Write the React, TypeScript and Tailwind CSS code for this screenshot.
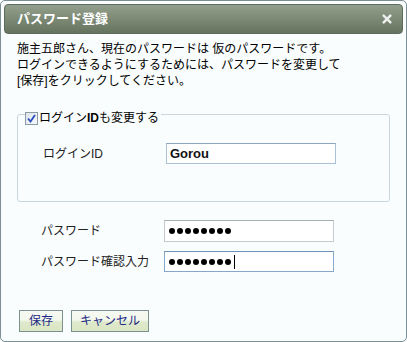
import React from "react";

const FONT = { fontFamily: '"Liberation Sans", "Noto Sans CJK JP", sans-serif' };

function Dots({ caret }: { caret?: boolean }) {
  return (
    <div className="flex items-center gap-[2px]">
      {Array.from({ length: 8 }).map((_, i) => (
        <span key={i} className="block w-[6px] h-[6px] rounded-full bg-black" />
      ))}
      {caret && <span className="block w-[1px] h-[14px] bg-black ml-[1px]" />}
    </div>
  );
}

export default function App() {
  return (
    <div
      className="w-[407px] h-[342px] border border-[#7b8f95] rounded-[5px] bg-[#fafdfd] p-[3px] flex flex-col text-black"
      style={FONT}
    >
      <div className="h-[30px] rounded-[4px] border border-[#5d6c5c] bg-gradient-to-b from-[#929f8c] to-[#65745f] flex items-center justify-between pl-[12px] pr-[10px]">
        <span className="text-white font-bold text-[13px] leading-[16px]">パスワード登録</span>
        <svg width="10" height="10" viewBox="0 0 10 10">
          <path d="M1.8 1.8 L8.2 8.2 M8.2 1.8 L1.8 8.2" stroke="#eef0ee" strokeWidth="2.4" strokeLinecap="square" />
        </svg>
      </div>

      <div className="px-[13px] flex flex-col">
        <p className="mt-[7px] text-[12px] leading-[16px]">
          施主五郎さん、現在のパスワードは 仮のパスワードです。
          <br />
          ログインできるようにするためには、パスワードを変更して
          <br />
          [保存]をクリックしてください。
        </p>

        <fieldset className="mt-[13px] border border-[#c9d6de] rounded-[3px] p-0 m-0">
          <legend className="ml-[7px] pr-[2px] h-[24px] pt-[8px] flex items-center p-0">
            <span className="flex items-center">
              <span className="w-[13px] h-[13px] border border-[#8b9ba3] bg-gradient-to-br from-[#dfe4ea] to-[#f7f9fb] flex items-center justify-center mr-[1px]">
                <svg width="9" height="9" viewBox="0 0 9 9">
                  <path d="M1 4.5 L3.5 7.5 L8 1" stroke="#2a4ec0" strokeWidth="1.8" fill="none" />
                </svg>
              </span>
              <span className="text-[12px] leading-[16px]">
                ログイン<b>ID</b>も変更する
              </span>
            </span>
          </legend>
          <div className="flex items-center pl-[25px] mt-[17px] mb-[37px]">
            <span className="w-[123px] text-[12px] leading-[16px] text-[#222]">ログインID</span>
            <div className="w-[170px] h-[21px] border border-[#a9c2d8] border-t-[#8ea6bd] bg-white flex items-center pl-[3px]">
              <span className="text-[13px] font-bold leading-[16px] text-[#111]">Gorou</span>
            </div>
          </div>
        </fieldset>

        <div className="flex flex-col pl-[24px] mt-[18px]">
          <div className="flex items-center">
            <span className="w-[123px] text-[12px] leading-[16px] text-[#222]">パスワード</span>
            <div className="w-[170px] h-[22px] border border-[#c4cacd] border-t-[#a9b0b4] bg-white flex items-center pl-[4px]">
              <Dots />
            </div>
          </div>
          <div className="flex items-center mt-[9px]">
            <span className="w-[123px] text-[12px] leading-[16px] text-[#222]">パスワード確認入力</span>
            <div className="w-[170px] h-[21px] border border-[#86a9cb] border-t-[#6f93b8] bg-white flex items-center pl-[4px]">
              <Dots caret />
            </div>
          </div>
        </div>

        <div className="flex items-center gap-[8px] ml-[2px] mt-[38px]">
          <button className="w-[44px] h-[22px] border border-[#7b9191] bg-[linear-gradient(to_bottom,#f6f9f0_0%,#f3f7ec_45%,#dfe9cb_55%,#dbe6c4_100%)] text-[12px] leading-[16px] text-[#1c2a86] flex items-center justify-center">
            保存
          </button>
          <button className="w-[78px] h-[22px] border border-[#7b9191] bg-[linear-gradient(to_bottom,#f6f9f0_0%,#f3f7ec_45%,#dfe9cb_55%,#dbe6c4_100%)] text-[12px] leading-[16px] text-[#1c2a86] flex items-center justify-center">
            キャンセル
          </button>
        </div>
      </div>
    </div>
  );
}
